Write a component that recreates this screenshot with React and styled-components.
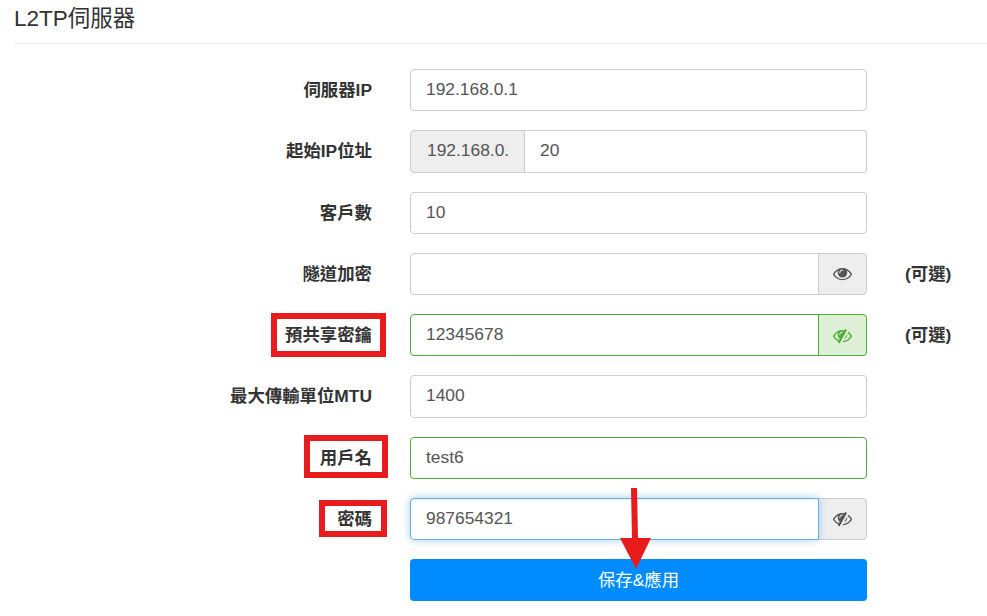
import React from 'react';
import styled, { createGlobalStyle } from 'styled-components';

const Global = createGlobalStyle`
  html, body { margin: 0; padding: 0; background: #fff; overflow: hidden; }
  body { font-family: "Liberation Sans", "Noto Sans CJK TC", sans-serif; color: #333; }
`;
const Page = styled.div`
  position: relative;
  width: 987px;
  height: 616px;
  padding-left: 14px;
  box-sizing: border-box;
  overflow: hidden;
`;
const Title = styled.h2`
  margin: 0;
  height: 44px;
  box-sizing: border-box;
  padding-top: 5px;
  font-size: 22.5px;
  line-height: 27px;
  font-weight: 400;
  color: #333;
  border-bottom: 1px solid #eee;
`;
const Form = styled.form`
  position: relative;
  display: grid;
  grid-template-columns: 358px 457px 120px;
  column-gap: 38px;
  row-gap: 19px;
  padding-top: 25px;
`;
const Label = styled.label`
  justify-self: end;
  position: relative;
  font-size: 17.4px;
  font-weight: 700;
  line-height: 42px;
  height: 42px;
  color: #333;
`;
const Mark = styled.span`
  position: absolute;
  top: ${p => p.$top}px;
  bottom: ${p => p.$bottom}px;
  left: ${p => p.$left}px;
  right: ${p => p.$right}px;
  border: 6px solid #e81c1c;
`;
const Group = styled.div`
  display: flex;
  height: 42.25px;
`;
const Input = styled.input`
  flex: 1;
  min-width: 0;
  box-sizing: border-box;
  height: 42.25px;
  padding: 0 15px 1px;
  font: 17.4px "Liberation Sans", "Noto Sans CJK TC", sans-serif;
  color: #555;
  background: #fff;
  outline: none;
  border: 1px solid ${p => p.$state === 'ok' ? '#4cae33' : p.$state === 'focus' ? '#66afe9' : '#ccc'};
  border-radius: ${p => p.$joinL ? '0 4px 4px 0' : p.$joinR ? '4px 0 0 4px' : '4px'};
  ${p => p.$joinL && 'border-left: 0;'}
  ${p => p.$state === 'focus' && 'box-shadow: inset 0 1px 1px rgba(0,0,0,.075), 0 0 8px rgba(102,175,233,.6); position: relative;'}
`;
const Prefix = styled.span`
  box-sizing: border-box;
  width: 115px;
  height: 42.25px;
  padding-left: 16px;
  font-size: 17.4px;
  line-height: 39px;
  color: #555;
  background: #eee;
  border: 1px solid #ccc;
  border-radius: 4px 0 0 4px;
`;
const Addon = styled.span`
  box-sizing: border-box;
  width: 49px;
  flex: none;
  height: 42.25px;
  display: flex;
  align-items: center;
  justify-content: center;
  margin-left: -1px;
  background: ${p => p.$ok ? '#dff0d8' : '#eee'};
  color: ${p => p.$ok ? '#4cae33' : '#555'};
  border: 1px solid ${p => p.$ok ? '#4cae33' : '#ccc'};
  border-radius: 0 4px 4px 0;
`;
const Hint = styled.span`
  font-size: 17.4px;
  font-weight: 700;
  line-height: 42px;
  height: 42px;
  color: #333;
`;
const Submit = styled.button`
  grid-column: 2;
  height: 42.25px;
  padding: 0 0 3px;
  border: 0;
  border-radius: 4px;
  background: #008cff;
  color: #fff;
  font: 17.4px "Liberation Sans", "Noto Sans CJK TC", sans-serif;
`;
const Arrow = styled.svg`
  position: absolute;
  left: 619px;
  top: 487px;
  pointer-events: none;
`;

const Eye = () => (
  <svg width="19" height="19" viewBox="0 0 1792 1792" fill="currentColor">
    <path d="M1664 960q-152-236-381-353 61 104 61 225 0 185-131.500 316.500t-316.500 131.500-316.500-131.500-131.500-316.500q0-121 61-225-229 117-381 353 133 205 333.500 326.500t434.500 121.500 434.500-121.500 333.500-326.500zm-720-384q0-20-14-34t-34-14q-125 0-214.500 89.500t-89.500 214.500q0 20 14 34t34 14 34-14 14-34q0-86 61-147t147-61q20 0 34-14t14-34zm848 384q0 34-20 69-140 230-376.500 368.500t-499.500 138.500-499.500-139-376.500-368q-20-35-20-69t20-69q140-229 376.500-368t499.500-139 499.500 139 376.500 368q20 35 20 69z" />
  </svg>
);
const EyeSlash = () => (
  <svg width="19" height="19" viewBox="0 0 1792 1792" fill="currentColor">
    <path d="M555 1335l78-141q-87-63-136-159t-49-203q0-121 61-225-229 117-381 353 167 258 427 375zm389-759q0-20-14-34t-34-14q-125 0-214.500 89.500t-89.500 214.500q0 20 14 34t34 14 34-14 14-34q0-86 61-147t147-61q20 0 34-14t14-34zm363-191q0 7-1 9-106 189-316 567t-315 566l-49 89q-10 16-28 16-12 0-134-70-16-10-16-28 0-12 44-87-143-65-263.500-173t-208.500-245q-20-31-20-69t20-69q153-235 380-371t496-136q89 0 180 17l54-97q10-16 28-16 5 0 18 6t31 15.500 33 18.500 31.500 18.500 19.500 11.500q16 10 16 27zm37 447q0 139-79 253.500t-209 164.500l280-502q8 45 8 84zm448 128q0 35-20 69-39 64-109 145-150 172-347.500 267t-419.500 95l74-132q212-18 392.500-137t301.500-307q-115-179-282-294l63-112q95 64 182.500 153t144.500 184q20 34 20 69z" />
  </svg>
);

export default function App() {
  return (
    <Page>
      <Global />
      <Title>L2TP伺服器</Title>
      <Form>
        <Label>伺服器IP</Label>
        <Group><Input defaultValue="192.168.0.1" /></Group>
        <span />

        <Label>起始IP位址</Label>
        <Group><Prefix>192.168.0.</Prefix><Input $joinL defaultValue="20" /></Group>
        <span />

        <Label>客戶數</Label>
        <Group><Input defaultValue="10" /></Group>
        <span />

        <Label>隧道加密</Label>
        <Group><Input $joinR /><Addon><Eye /></Addon></Group>
        <Hint>(可選)</Hint>

        <Label>預共享密鑰<Mark $top={-1} $bottom={-1} $left={-14} $right={-14} /></Label>
        <Group><Input $joinR $state="ok" defaultValue="12345678" /><Addon $ok><EyeSlash /></Addon></Group>
        <Hint>(可選)</Hint>

        <Label>最大傳輸單位MTU</Label>
        <Group><Input defaultValue="1400" /></Group>
        <span />

        <Label>用戶名<Mark $top={-2} $bottom={1} $left={-16} $right={-16} /></Label>
        <Group><Input $state="ok" defaultValue="test6" /></Group>
        <span />

        <Label>密碼<Mark $top={2} $bottom={3} $left={-18} $right={-15} /></Label>
        <Group><Input $joinR $state="focus" defaultValue="987654321" /><Addon><EyeSlash /></Addon></Group>
        <span />

        <Submit type="button">保存&amp;應用</Submit>
      </Form>
      <Arrow width="34" height="84" viewBox="0 0 34 84">
        <path d="M12 1h6l1 50h13L17 82 1 51h12Z" fill="#e81c1c" />
      </Arrow>
    </Page>
  );
}
